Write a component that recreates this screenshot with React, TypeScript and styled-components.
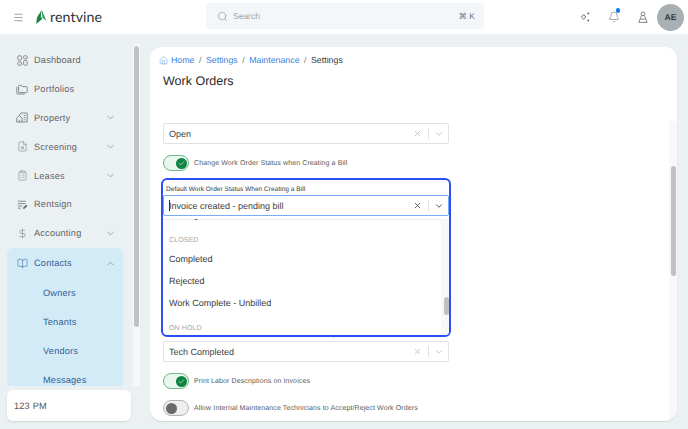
import styled, { createGlobalStyle } from "styled-components";
import {
  BookOpen,
  Check,
  ChevronDown,
  ChevronUp,
  ClipboardList,
  DollarSign,
  FileSearch,
  House,
  Menu,
  Search,
  X,
  Bell,
} from "lucide-react";

const GlobalStyle = createGlobalStyle`
  html, body {
    margin: 0;
    height: 100%;
    overflow: hidden;
    background: #ebf0f3;
    font-family: "Liberation Sans", Arial, sans-serif;
    text-rendering: geometricPrecision;
  }
  * { box-sizing: border-box; }
`;

const Page = styled.div`
  width: 688px;
  height: 429px;
  display: flex;
  flex-direction: column;
  overflow: hidden;
`;

const TopBar = styled.header`
  height: 34px;
  flex: none;
  background: #fff;
  display: flex;
  align-items: center;
  padding: 0 4px 0 13px;
`;

const BurgerButton = styled.div`
  width: 11px;
  display: flex;
  color: #666;
  margin-right: 12px;
`;

const Logo = styled.div`
  display: flex;
  align-items: center;
  gap: 3px;
  width: 170px;
  font-family: "Lato", sans-serif;
  font-size: 14.2px;
  letter-spacing: 0.1px;
  color: #2f3437;
`;

const SearchBox = styled.div`
  width: 278px;
  height: 26px;
  margin-top: -2px;
  background: #f4f7fa;
  border-radius: 3px;
  display: flex;
  align-items: center;
  padding: 0 9px 0 11px;
  gap: 5px;
  color: #777;
`;

const SearchHint = styled.span`
  flex: 1;
  font-size: 8.5px;
  color: #a0a4a8;
`;

const Shortcut = styled.span`
  font-size: 8.5px;
  color: #777;
`;

const TopActions = styled.div`
  margin-left: auto;
  display: flex;
  align-items: center;
  color: #555;
`;

const ActionIcon = styled.div`
  position: relative;
  width: 29px;
  display: flex;
  justify-content: center;
`;

const Dot = styled.span`
  position: absolute;
  top: -3px;
  right: 8px;
  width: 4.5px;
  height: 4.5px;
  border-radius: 50%;
  background: #0d7be8;
`;

const Avatar = styled.div`
  width: 27px;
  height: 27px;
  border-radius: 50%;
  background: #a9b0b3;
  color: #33383b;
  font-size: 8.5px;
  font-weight: bold;
  display: flex;
  align-items: center;
  justify-content: center;
`;

const Body = styled.div`
  flex: 1;
  min-height: 0;
  display: flex;
  padding: 10px 11px 8px 0;
  gap: 10px;
`;

const Sidebar = styled.aside`
  width: 140px;
  flex: none;
  display: flex;
  flex-direction: column;
  gap: 4px;
`;

const SideScroll = styled.div`
  height: 342px;
  display: flex;
  overflow: hidden;
`;

const NavList = styled.nav`
  flex: 1;
  padding: 2px 10px 0 7px;
  overflow: hidden;
`;

const NavRow = styled.div`
  height: 28.8px;
  display: flex;
  align-items: center;
  padding: 0 7.5px 0 9px;
  font-size: 9.2px;
  letter-spacing: 0.2px;
  color: #5f6468;
`;

const IconSlot = styled.span`
  width: 12px;
  flex: none;
  display: flex;
  justify-content: center;
  color: #707579;
`;

const NavLabel = styled.span`
  flex: 1;
  margin-left: 6px;
`;

const ContactsGroup = styled.div`
  margin-top: 0.4px;
  background: #d3eaf7;
  border-radius: 6px 6px 0 0;
  color: #2f5f95;
  height: 138px;
  overflow: hidden;
`;

const ContactsRow = styled(NavRow)`
  height: 31px;
  color: #2f5f95;

  ${IconSlot} {
    color: #2f5f95;
  }
`;

const SubItem = styled.div`
  height: 28.8px;
  display: flex;
  align-items: center;
  padding-left: 36px;
  font-size: 9.2px;
  letter-spacing: 0.2px;
`;

const SideTrack = styled.div`
  width: 7px;
  background: #f8f8f8;
  padding: 2px 1px 0;
`;

const SideThumb = styled.div`
  height: 281px;
  background: #c1c1c1;
  border-radius: 3px;
`;

const ClockCard = styled.div`
  margin: 0 9px 0 7px;
  height: 31px;
  background: #fff;
  border-radius: 6px;
  box-shadow: 0 1px 2px rgba(0, 0, 0, 0.12);
  display: flex;
  align-items: center;
  padding-left: 7px;
  font-size: 9.2px;
  letter-spacing: 0.2px;
  color: #555;
`;

const MainPanel = styled.main`
  flex: 1;
  min-width: 0;
  background: #fff;
  border-radius: 12px;
  box-shadow: 0 1px 1px rgba(0, 0, 0, 0.1);
  display: flex;
  flex-direction: column;
  overflow: hidden;
  margin-top: 3px;
`;

const PanelHead = styled.div`
  height: 74px;
  flex: none;
  padding: 7px 13px 0 9px;
`;

const Breadcrumbs = styled.div`
  display: flex;
  align-items: center;
  height: 12px;
  font-size: 8.8px;
  gap: 4.5px;
`;

const Crumb = styled.span<{ $current?: boolean }>`
  display: flex;
  align-items: center;
  gap: 3px;
  color: ${(p) => (p.$current ? "#3a3a3a" : "#3b82dc")};
`;

const Slash = styled.span`
  color: #777;
`;

const Title = styled.h1`
  margin: 8px 0 0 4px;
  font-size: 12.5px;
  line-height: 15px;
  font-weight: normal;
  color: #2a2a2a;
`;

const PanelBody = styled.div`
  flex: 1;
  min-height: 0;
  display: flex;
`;

const Form = styled.div`
  flex: 1;
  overflow: hidden;
  padding: 2px 0 0 13px;
`;

const SelectBox = styled.div<{ $focus?: boolean }>`
  width: 286px;
  height: 21px;
  border-radius: 2px;
  border: 1px solid ${(p) => (p.$focus ? "#78acf7" : "#e2e2e2")};
  background: #fff;
  display: flex;
  align-items: center;
  padding: 0 4px 0 5px;
  font-size: 9px;
  color: #3e3e3e;
`;

const SelectValue = styled.span`
  flex: 1;
`;

const Caret = styled.span`
  width: 1px;
  height: 11px;
  background: #333;
  margin-right: -1px;
`;

const Divider = styled.span`
  width: 1px;
  height: 11px;
  background: #e2e2e2;
  margin: 0 5px 0 6px;
`;

const ToggleRow = styled.div`
  display: flex;
  align-items: center;
  gap: 5px;
  margin-top: 11px;
  font-size: 7px;
  letter-spacing: 0.11px;
  color: #5c5c5c;
`;

const Toggle = styled.div<{ $on?: boolean }>`
  width: 26px;
  height: 16px;
  flex: none;
  border-radius: 8px;
  display: flex;
  align-items: center;
  padding: 0 1.5px;
  justify-content: ${(p) => (p.$on ? "flex-end" : "flex-start")};
  background: ${(p) => (p.$on ? "#eaf6ee" : "#eeeeee")};
  border: 1px solid ${(p) => (p.$on ? "#6cb98a" : "#b5b5b5")};
`;

const Knob = styled.div<{ $on?: boolean }>`
  width: 11px;
  height: 11px;
  border-radius: 50%;
  background: ${(p) => (p.$on ? "#0f8442" : "#6a6a6a")};
  color: #fff;
  display: flex;
  align-items: center;
  justify-content: center;
`;

const FocusFrame = styled.div`
  position: relative;
  z-index: 2;
  width: 290px;
  height: 159px;
  margin: 7px 0 0 -2px;
  border: 2px solid #2a50f5;
  border-radius: 6px;
  background: #fff;
  overflow: hidden;
`;

const FieldLabel = styled.div`
  height: 15px;
  padding: 6px 0 0 3px;
  font-size: 6.6px;
  line-height: 8px;
  color: #3c3c3c;
`;

const OptionsMenu = styled.div`
  height: 118px;
  margin-top: 3px;
  display: flex;
  box-shadow: inset 0 1px 1px rgba(0, 0, 0, 0.08);
  overflow: hidden;
`;

const Options = styled.div`
  flex: 1;
  margin-top: -15.5px;
  font-size: 9px;
  color: #3a3a3a;
`;

const OptionItem = styled.div`
  height: 22px;
  display: flex;
  align-items: center;
  padding-left: 6px;
`;

const GroupName = styled.div<{ $top: number }>`
  margin-top: ${(p) => p.$top}px;
  height: 15px;
  display: flex;
  align-items: center;
  padding-left: 6px;
  font-size: 7px;
  letter-spacing: 0.1px;
  color: #a6a6a6;
`;

const MenuTrack = styled.div`
  width: 8px;
  background: #f8f8f8;
  padding-top: 78px;
`;

const MenuThumb = styled.div`
  width: 4.5px;
  height: 18px;
  margin-left: 3px;
  border-radius: 3px;
  background: #c1c1c1;
`;

const ClippedLabel = styled.div`
  height: 4px;
  overflow: hidden;
  padding-left: 7px;
  font-size: 7px;
  line-height: 8px;
  letter-spacing: 0.2px;
  color: #5c5c5c;
`;

const ClippedLabelText = styled.div`
  margin-top: -6px;
`;

const Track = styled.div`
  width: 8px;
  flex: none;
  background: #f8f8f8;
  padding: 45px 1px 0 2px;
`;

const Thumb = styled.div`
  height: 110px;
  background: #c1c1c1;
  border-radius: 3px;
`;

const iconProps = { size: 11, strokeWidth: 1.1 };

const GridIcon = () => (
  <svg width="11" height="11" viewBox="0 0 11 11" fill="none" stroke="currentColor" strokeWidth="0.8">
    <rect x="0.8" y="0.8" width="3.6" height="4.4" rx="0.8" />
    <rect x="6.6" y="0.8" width="3.6" height="3" rx="0.8" />
    <rect x="0.8" y="7" width="3.6" height="3.2" rx="0.8" />
    <rect x="6.6" y="5.6" width="3.6" height="4.6" rx="0.8" />
  </svg>
);

const FolderIcon = () => (
  <svg width="12" height="11" viewBox="0 0 12 11" fill="none" stroke="currentColor" strokeWidth="0.8">
    <path d="M2.6 7.8V2.2a.8.8 0 0 1 .8-.8h2l1 1.2h4a.8.8 0 0 1 .8.8v4.4a.8.8 0 0 1-.8.8H3.4a.8.8 0 0 1-.8-.8z" />
    <path d="M.8 3v6.2a.8.8 0 0 0 .8.8h7.2" />
  </svg>
);

const PropertyIcon = () => (
  <svg width="12" height="11" viewBox="0 0 12 11" fill="none" stroke="currentColor" strokeWidth="0.8">
    <path d="M.7 10V6l2.6-2.3L6 6v4z" />
    <path d="M3.3 3.7 4.8 1h6.4v9H6" />
    <path d="M7.6 3.4h2M7.6 5.6h2M7.6 7.8h2M3.3 10V7.8" />
  </svg>
);

const RentsignIcon = () => (
  <svg width="11" height="11" viewBox="0 0 11 11" fill="none" stroke="currentColor" strokeWidth="0.8">
    <path d="M.8 2.2h8M.8 4.6h8M.8 7h4.6M.8 9.2h3" />
    <path d="M6.4 9.6l.4-1.4 2.4-2.2 1 1-2.4 2.2z" fill="currentColor" />
  </svg>
);

const SparkIcon = () => (
  <svg width="12" height="12" viewBox="0 0 12 12" fill="none" stroke="currentColor">
    <path d="M4.6 3.6 6.8 6 4.6 8.2 2.4 6z" strokeWidth="0.9" />
    <path d="M9.2 1.4 10 2.4 9.2 3.4 8.4 2.4z M9.2 8.4 10 9.4 9.2 10.4 8.4 9.4z" fill="currentColor" strokeWidth="0.4" />
  </svg>
);

const TechIcon = () => (
  <svg width="12" height="13" viewBox="0 0 12 13" fill="none" stroke="#6a6a6a" strokeWidth="0.8">
    <circle cx="6" cy="2.8" r="1.8" />
    <path d="M4.6 4.4 1.8 11.4h8.4L7.4 4.4" />
    <path d="M3.6 8.2h4.8" />
  </svg>
);

const RentvineMark = () => (
  <svg width="11" height="14" viewBox="0 0 11 14">
    <path d="M5.6 0 4.8 6.4 6.2 9 .2 14 1 7.6z" fill="#17853f" />
    <path d="M5.8 0 10.4 11 6.4 7.2z" fill="#249c4c" />
  </svg>
);

const OnToggle = () => (
  <Toggle $on>
    <Knob $on>
      <Check size={7} strokeWidth={2} />
    </Knob>
  </Toggle>
);

const App = () => {
  return (
    <Page>
      <GlobalStyle />
      <TopBar>
        <BurgerButton>
          <Menu size={11} strokeWidth={1.3} />
        </BurgerButton>
        <Logo>
          <RentvineMark />
          <span>rentvine</span>
        </Logo>
        <SearchBox>
          <Search size={11} strokeWidth={1.1} />
          <SearchHint>Search</SearchHint>
          <Shortcut>⌘ K</Shortcut>
        </SearchBox>
        <TopActions>
          <ActionIcon>
            <SparkIcon />
          </ActionIcon>
          <ActionIcon>
            <Bell size={12} strokeWidth={1} />
            <Dot />
          </ActionIcon>
          <ActionIcon>
            <TechIcon />
          </ActionIcon>
          <Avatar>AE</Avatar>
        </TopActions>
      </TopBar>
      <Body>
        <Sidebar>
          <SideScroll>
            <NavList>
              <NavRow>
                <IconSlot><GridIcon /></IconSlot>
                <NavLabel>Dashboard</NavLabel>
              </NavRow>
              <NavRow>
                <IconSlot><FolderIcon /></IconSlot>
                <NavLabel>Portfolios</NavLabel>
              </NavRow>
              <NavRow>
                <IconSlot><PropertyIcon /></IconSlot>
                <NavLabel>Property</NavLabel>
                <ChevronDown {...iconProps} />
              </NavRow>
              <NavRow>
                <IconSlot><FileSearch {...iconProps} /></IconSlot>
                <NavLabel>Screening</NavLabel>
                <ChevronDown {...iconProps} />
              </NavRow>
              <NavRow>
                <IconSlot><ClipboardList {...iconProps} /></IconSlot>
                <NavLabel>Leases</NavLabel>
                <ChevronDown {...iconProps} />
              </NavRow>
              <NavRow>
                <IconSlot><RentsignIcon /></IconSlot>
                <NavLabel>Rentsign</NavLabel>
              </NavRow>
              <NavRow>
                <IconSlot><DollarSign {...iconProps} /></IconSlot>
                <NavLabel>Accounting</NavLabel>
                <ChevronDown {...iconProps} />
              </NavRow>
              <ContactsGroup>
                <ContactsRow>
                  <IconSlot><BookOpen {...iconProps} /></IconSlot>
                  <NavLabel>Contacts</NavLabel>
                  <ChevronUp {...iconProps} />
                </ContactsRow>
                <SubItem>Owners</SubItem>
                <SubItem>Tenants</SubItem>
                <SubItem>Vendors</SubItem>
                <SubItem>Messages</SubItem>
              </ContactsGroup>
            </NavList>
            <SideTrack>
              <SideThumb />
            </SideTrack>
          </SideScroll>
          <ClockCard>123 PM</ClockCard>
        </Sidebar>
        <MainPanel>
          <PanelHead>
            <Breadcrumbs>
              <Crumb>
                <House size={9} strokeWidth={1.1} />
                Home
              </Crumb>
              <Slash>/</Slash>
              <Crumb>Settings</Crumb>
              <Slash>/</Slash>
              <Crumb>Maintenance</Crumb>
              <Slash>/</Slash>
              <Crumb $current>Settings</Crumb>
            </Breadcrumbs>
            <Title>Work Orders</Title>
          </PanelHead>
          <PanelBody>
            <Form>
              <SelectBox>
                <SelectValue>Open</SelectValue>
                <X size={9} color="#b5b5b5" />
                <Divider />
                <ChevronDown size={10} color="#bbb" />
              </SelectBox>
              <ToggleRow>
                <OnToggle />
                Change Work Order Status when Creating a Bill
              </ToggleRow>
              <FocusFrame>
                <FieldLabel>Default Work Order Status When Creating a Bill</FieldLabel>
                <SelectBox $focus>
                  <Caret />
                  <SelectValue>Invoice created - pending bill</SelectValue>
                  <X size={9} color="#444" strokeWidth={2.2} />
                  <Divider />
                  <ChevronDown size={10} color="#444" strokeWidth={2.2} />
                </SelectBox>
                <OptionsMenu>
                  <Options>
                    <OptionItem>Waiting</OptionItem>
                    <GroupName $top={7.5}>CLOSED</GroupName>
                    <OptionItem>Completed</OptionItem>
                    <OptionItem>Rejected</OptionItem>
                    <OptionItem>Work Complete - Unbilled</OptionItem>
                    <GroupName $top={6.5}>ON HOLD</GroupName>
                  </Options>
                  <MenuTrack>
                    <MenuThumb />
                  </MenuTrack>
                </OptionsMenu>
              </FocusFrame>
              <ClippedLabel>
                <ClippedLabelText>Default Work Order Status When Technician Completes Work Order</ClippedLabelText>
              </ClippedLabel>
              <SelectBox>
                <SelectValue>Tech Completed</SelectValue>
                <X size={9} color="#b5b5b5" />
                <Divider />
                <ChevronDown size={10} color="#bbb" />
              </SelectBox>
              <ToggleRow>
                <OnToggle />
                Print Labor Descriptions on Invoices
              </ToggleRow>
              <ToggleRow>
                <Toggle>
                  <Knob />
                </Toggle>
                Allow Internal Maintenance Technicians to Accept/Reject Work Orders
              </ToggleRow>
            </Form>
            <Track>
              <Thumb />
            </Track>
          </PanelBody>
        </MainPanel>
      </Body>
    </Page>
  );
};

export default App;
